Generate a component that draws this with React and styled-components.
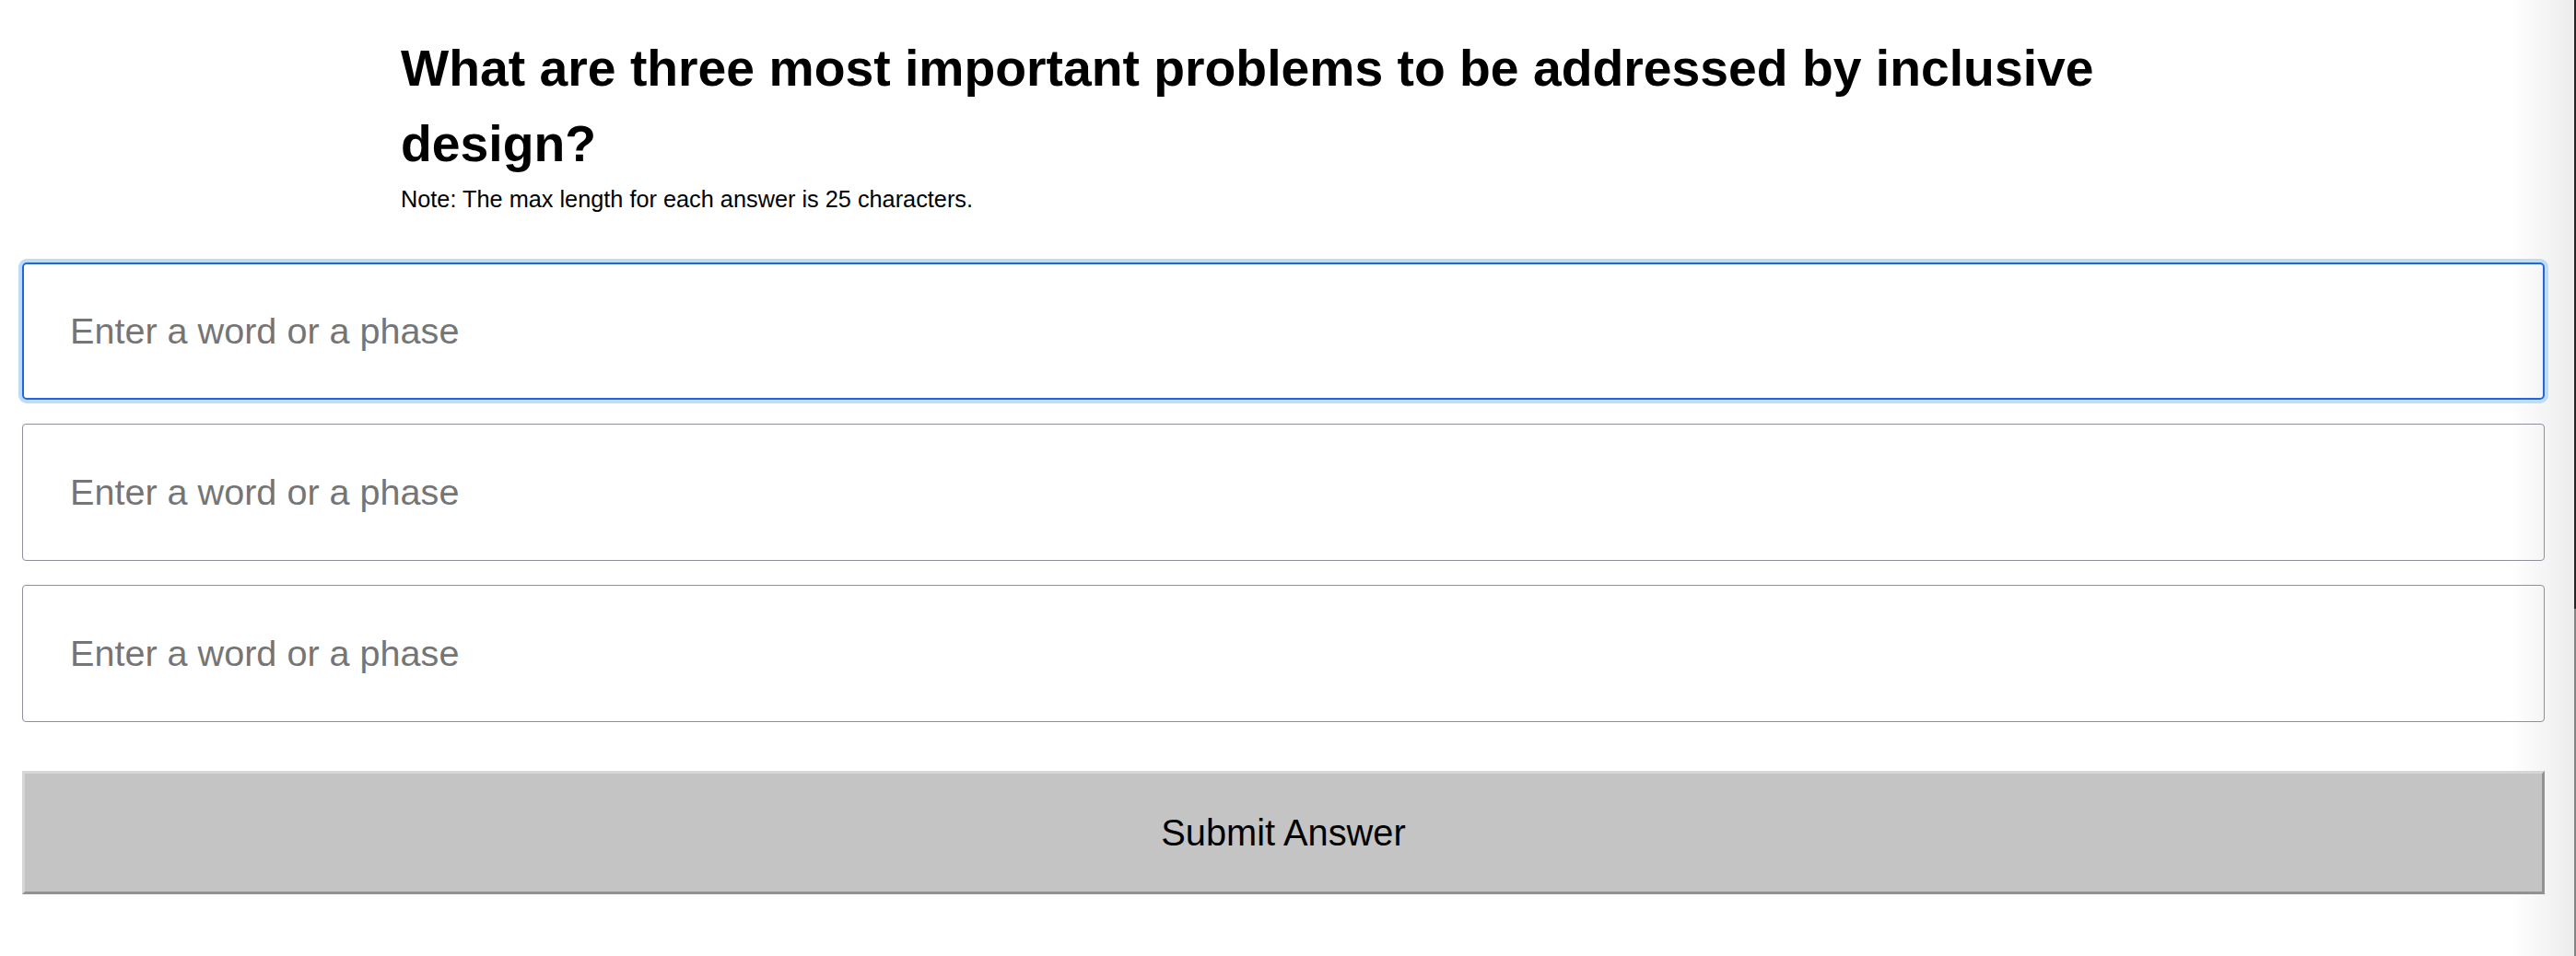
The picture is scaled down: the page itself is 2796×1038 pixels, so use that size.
import React from "react";
import styled, { createGlobalStyle, css } from "styled-components";

// page frame: white page with a soft grey edge and a thin bar on the right
const GlobalStyle = createGlobalStyle`
  html {
    height: 100%;
    background:
      linear-gradient(#262626, #262626) right top / 2px 661px no-repeat,
      linear-gradient(#858585, #858585) right top / 2px 100% no-repeat,
      linear-gradient(to right, #ffffff 2725px, #ececec 2794px);
  }
  body {
    margin: 0;
    font-family: "Liberation Sans", Arial, Helvetica, sans-serif;
    color: #000;
  }
`;

const Page = styled.main`
  padding-top: 34px;
`;

const Header = styled.header`
  max-width: 1926px;
  margin: 0 auto;
`;

const Title = styled.h2`
  margin: 0;
  font-size: 55.3px;
  font-weight: 700;
  line-height: 81.5px;
`;

const Note = styled.p`
  margin: 5px 0 0;
  font-size: 25.3px;
  line-height: 29px;
`;

const Form = styled.form`
  display: flex;
  flex-direction: column;
  gap: 26px;
  padding: 54px 34px 0 24px;
`;

const AnswerInput = styled.input`
  box-sizing: border-box;
  width: 100%;
  height: 149px;
  margin: 0;
  padding: 0 0 0 51px;
  border: 1px solid #8f8f9d;
  border-radius: 4px;
  background: transparent;
  font-family: "Liberation Sans", Arial, sans-serif;
  font-size: 39.6px;
  color: #000;
  outline: none;

  &::placeholder {
    color: #757575;
  }

  ${({ $active }) =>
    $active &&
    css`
      padding-left: 50px;
      border: 2px solid #2465dc;
      box-shadow: 0 0 0 4px #bcdcf8;
      border-radius: 5px;
    `}
`;

const SubmitButton = styled.button`
  box-sizing: border-box;
  width: 100%;
  height: 134px;
  margin-top: 27px;
  border-style: solid;
  border-width: 3px;
  border-color: #d6d6d6 #929292 #929292 #d6d6d6;
  background: #c4c4c4;
  font-family: "Liberation Sans", Arial, sans-serif;
  font-size: 39.8px;
  color: #000;
  cursor: pointer;
`;

const fields = [0, 1, 2];

export default function App() {
  const onSubmit = (event) => {
    event.preventDefault();
  };

  return (
    <>
      <GlobalStyle />
      <Page>
        <Header>
          <Title>
            What are three most important problems to be addressed by
            inclusive design?
          </Title>
          <Note>Note: The max length for each answer is 25 characters.</Note>
        </Header>
        <Form onSubmit={onSubmit}>
          {fields.map((i) => (
            <AnswerInput
              key={i}
              type="text"
              name={`answer${i}`}
              maxLength="25"
              placeholder="Enter a word or a phase"
              $active={i === 0}
            />
          ))}
          <SubmitButton type="submit">Submit Answer</SubmitButton>
        </Form>
      </Page>
    </>
  );
}
